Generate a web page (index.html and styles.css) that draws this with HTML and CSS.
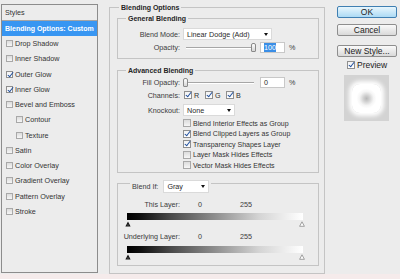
FILE: index.html
```html
<!DOCTYPE html>
<html lang="en">
<head>
<meta charset="utf-8">
<title>Layer Style</title>
<link rel="stylesheet" href="styles.css">
</head>
<body>
<div class="dialog">
  <div class="styles-panel">
    <div class="styles-head">Styles</div>
    <div class="style-item selected">Blending Options: Custom</div>
    <div class="style-item"><span class="cb"></span>Drop Shadow</div>
    <div class="style-item"><span class="cb"></span>Inner Shadow</div>
    <div class="style-item"><span class="cb checked"></span>Outer Glow</div>
    <div class="style-item"><span class="cb checked"></span>Inner Glow</div>
    <div class="style-item"><span class="cb"></span>Bevel and Emboss</div>
    <div class="style-item sub"><span class="cb"></span>Contour</div>
    <div class="style-item sub"><span class="cb"></span>Texture</div>
    <div class="style-item"><span class="cb"></span>Satin</div>
    <div class="style-item"><span class="cb"></span>Color Overlay</div>
    <div class="style-item"><span class="cb"></span>Gradient Overlay</div>
    <div class="style-item"><span class="cb"></span>Pattern Overlay</div>
    <div class="style-item"><span class="cb"></span>Stroke</div>
  </div>

  <fieldset class="group outer">
    <legend class="title">Blending Options</legend>

    <fieldset class="group general">
      <legend class="title">General Blending</legend>
      <div class="row r-mode">
        <span class="lbl">Blend Mode:</span>
        <div class="select mode"><span>Linear Dodge (Add)</span><span class="arrow"></span></div>
      </div>
      <div class="row r-opacity">
        <span class="lbl">Opacity:</span>
        <div class="slider"><span class="thumb" style="left:68px"></span></div>
        <div class="num"><span class="selection">100</span></div>
        <span class="pct">%</span>
      </div>
    </fieldset>

    <fieldset class="group advanced">
      <legend class="title">Advanced Blending</legend>
      <div class="row r-fill">
        <span class="lbl">Fill Opacity:</span>
        <div class="slider"><span class="thumb" style="left:0px"></span></div>
        <div class="num">0</div>
        <span class="pct">%</span>
      </div>
      <div class="row r-channels">
        <span class="lbl">Channels:</span>
        <div class="channels">
          <span class="chan"><span class="cb checked"></span>R</span>
          <span class="chan"><span class="cb checked"></span>G</span>
          <span class="chan"><span class="cb checked"></span>B</span>
        </div>
      </div>
      <div class="row r-knockout">
        <span class="lbl">Knockout:</span>
        <div class="select knock"><span>None</span><span class="arrow"></span></div>
      </div>
      <div class="options">
        <div class="opt"><span class="cb"></span>Blend Interior Effects as Group</div>
        <div class="opt"><span class="cb checked"></span>Blend Clipped Layers as Group</div>
        <div class="opt"><span class="cb checked"></span>Transparency Shapes Layer</div>
        <div class="opt"><span class="cb"></span>Layer Mask Hides Effects</div>
        <div class="opt"><span class="cb"></span>Vector Mask Hides Effects</div>
      </div>
    </fieldset>

    <fieldset class="group blendif">
      <legend class="bi-legend"><span class="bi-label">Blend If:</span><div class="select gray"><span>Gray</span><span class="arrow"></span></div></legend>
      <div class="level-row first"><span class="lbl">This Layer:</span><span class="v0">0</span><span class="v1">255</span></div>
      <div class="ramp"></div>
      <div class="markers">
        <svg class="tri" width="6" height="6" viewBox="0 0 6 6"><path d="M3 0.5 L5.6 5.5 L0.4 5.5 Z" fill="#111"/><path d="M3 3 L3.8 4.6 L2.2 4.6 Z" fill="#777"/></svg>
        <svg class="tri" width="6" height="6" viewBox="0 0 6 6"><path d="M3 0.8 L5.4 5.3 L0.6 5.3 Z" fill="#fff" stroke="#8a8a8a" stroke-width="0.8"/></svg>
      </div>
      <div class="level-row"><span class="lbl">Underlying Layer:</span><span class="v0">0</span><span class="v1">255</span></div>
      <div class="ramp"></div>
      <div class="markers">
        <svg class="tri" width="6" height="6" viewBox="0 0 6 6"><path d="M3 0.5 L5.6 5.5 L0.4 5.5 Z" fill="#111"/><path d="M3 3 L3.8 4.6 L2.2 4.6 Z" fill="#777"/></svg>
        <svg class="tri" width="6" height="6" viewBox="0 0 6 6"><path d="M3 0.8 L5.4 5.3 L0.6 5.3 Z" fill="#fff" stroke="#8a8a8a" stroke-width="0.8"/></svg>
      </div>
    </fieldset>
  </fieldset>

  <div class="actions">
    <div class="btn ok">OK</div>
    <div class="btn cancel">Cancel</div>
    <div class="btn newstyle">New Style...</div>
    <div class="preview-toggle"><span class="cb checked"></span>Preview</div>
    <div class="preview"><div class="swatch"></div></div>
  </div>
</div>
<div class="strip"></div>
</body>
</html>
```

FILE: styles.css
```css
* { box-sizing: border-box; }
html, body { margin: 0; padding: 0; }
body {
  width: 400px;
  height: 279px;
  overflow: hidden;
  background: #ececec;
  font-family: "Liberation Sans", Arial, sans-serif;
  font-size: 7.2px;
  color: #333;
}
.dialog { display: flex; align-items: flex-start; height: 274px; }
.strip { height: 5px; background: #f5ebeb; }

/* Styles list */
.styles-panel {
  flex: none;
  width: 97px;
  height: 269px;
  margin: 4px 0 0 1px;
  border: 1px solid #8c8c8c;
}
.styles-head {
  height: 16px;
  line-height: 15px;
  padding-left: 3px;
  border-bottom: 1px solid #a4a4a4;
}
.style-item {
  display: flex;
  align-items: center;
  height: 15.25px;
  padding-left: 4px;
}
.style-item.selected {
  height: 15px;
  padding-left: 3px;
  background: #3896f2;
  color: #fff;
  font-weight: bold;
  font-size: 7px;
}
.style-item.sub { padding-left: 14px; }
.style-item .cb { width: 7px; height: 7px; margin-right: 2px; }

/* Checkboxes */
.cb {
  position: relative;
  flex: none;
  width: 8px;
  height: 8px;
  border: 1px solid #a8a8a8;
  background: linear-gradient(#dcdcdc, #f6f6f6);
}
.cb.checked { background: linear-gradient(#f2f2f2, #fff); border-color: #8f8f8f; }
.cb.checked::after {
  content: "";
  position: absolute;
  left: 2px;
  top: -1px;
  width: 2px;
  height: 5px;
  border: solid #1f4f9e;
  border-width: 0 1.5px 1.5px 0;
  transform: rotate(38deg);
}

/* Group boxes */
.group {
  margin: 0;
  padding: 0;
  min-width: 0;
  border: 1px solid #c4c4c4;
}
.group > legend { padding: 0 2px; }
.title { font-weight: bold; font-size: 7px; line-height: 9px; color: #262626; }

.outer {
  flex: none;
  width: 216px;
  height: 271px;
  margin: 3px 0 0 11px;
  padding: 2px 5px 0 7px;
}
.outer > legend { margin-left: 2px; }

.general { padding: 0 0 5px 0; }
.general > legend, .advanced > legend { margin-left: 8px; }
.advanced { margin-top: 7px; padding: 0 0 1.5px 0; }

.row { display: flex; align-items: center; }
.lbl { flex: none; width: 62px; text-align: right; color: #3a3a3a; }

.select {
  display: flex;
  align-items: center;
  justify-content: space-between;
  flex: none;
  height: 12px;
  padding: 0 3px;
  background: #fff;
  border: 1px solid #dadada;
  color: #2a2a2a;
}
.arrow {
  width: 0;
  height: 0;
  border-left: 2.5px solid transparent;
  border-right: 2.5px solid transparent;
  border-top: 3px solid #111;
}
.r-mode { height: 12px; margin-top: 5px; }
.mode { width: 89px; margin-left: 3px; }

.r-opacity, .r-fill { height: 11px; margin-top: 2px; }
.slider {
  position: relative;
  flex: none;
  width: 73px;
  height: 11px;
  margin-left: 3px;
}
.slider::before {
  content: "";
  position: absolute;
  left: 3px;
  right: 2px;
  top: 5px;
  height: 1px;
  background: #a6a6a6;
  box-shadow: 0 1px 0 #fff;
}
.thumb {
  position: absolute;
  top: 1px;
  width: 5px;
  height: 9px;
  border: 1px solid #8a8a8a;
  border-radius: 2px 2px 1px 1px;
  background: linear-gradient(#fff, #d6d6d6);
}
.num {
  flex: none;
  width: 25px;
  height: 11px;
  margin-left: 4px;
  padding-left: 3px;
  line-height: 9px;
  background: #fff;
  border: 1px solid #c8c8c8;
  color: #2a2a2a;
}
.selection { background: #3a8ee6; color: #fff; }
.pct { margin-left: 4px; color: #3a3a3a; }

.r-channels { height: 10px; margin-top: 2px; }
.channels { display: flex; margin-left: 4px; }
.chan { display: flex; align-items: center; width: 21px; gap: 2px; }

.r-knockout { height: 12px; margin-top: 4px; }
.knock { width: 52px; margin-left: 3px; }

.options { margin: 2px 0 0 65px; }
.opt { display: flex; align-items: center; height: 10.5px; gap: 2px; color: #333; font-size: 7px; }

/* Blend If */
.blendif { margin-top: 6px; padding: 0 0 5px 0; }
.bi-legend {
  display: flex;
  align-items: flex-start;
  height: 8px;
  margin-left: 12px;
}
.bi-label { line-height: 13px; margin-top: 1px; color: #3a3a3a; }
.gray { width: 46px; height: 13px; margin: 1px 0 0 5px; }

.level-row { display: flex; align-items: center; height: 9px; margin-top: 5px; }
.level-row.first { margin-top: 13px; }
.v0 { width: 42px; margin-left: 18px; color: #3a3a3a; }
.v1 { color: #3a3a3a; }
.ramp {
  width: 176px;
  height: 7px;
  margin: 4px 0 0 9px;
  background: linear-gradient(to right, #000 0%, #111 8%, #4a4a4a 25%, #8e8e8e 50%, #d4d4d4 75%, #fff 100%);
}
.level-row + .ramp { margin-top: 5px; }
.level-row.first + .ramp { margin-top: 4px; }
.markers {
  display: flex;
  justify-content: space-between;
  width: 180px;
  height: 6px;
  margin: 1px 0 0 7px;
}
.tri { display: block; }

/* Buttons column */
.actions {
  flex: none;
  display: flex;
  flex-direction: column;
  width: 60px;
  margin: 6px 0 0 12px;
}
.btn {
  height: 12px;
  line-height: 10px;
  text-align: center;
  font-size: 8.5px;
  color: #222;
  border: 1px solid #8e8e8e;
  border-radius: 2px;
  background: linear-gradient(#fafafa, #d9d9d9);
}
.ok { border-color: #3f7fb2; background: linear-gradient(#e8f6fd, #acdaf4); }
.cancel { margin-top: 6px; }
.newstyle { margin-top: 9px; }
.preview-toggle {
  display: flex;
  align-items: center;
  gap: 2px;
  height: 9px;
  margin: 3px 0 0 10px;
  font-size: 8.5px;
  color: #222;
}
.preview {
  display: flex;
  align-items: center;
  justify-content: center;
  width: 45px;
  height: 46px;
  margin: 6px 0 0 7px;
  background: #d3d3d3;
}
.swatch {
  width: 29px;
  height: 29px;
  border-radius: 8px;
  background: radial-gradient(circle, #b8b8b8 0, #cbcbcb 2.5px, #f4f4f4 7px, #fff 10px);
  box-shadow: 0 0 4px 3px #fff;
  filter: blur(0.6px);
}
```
